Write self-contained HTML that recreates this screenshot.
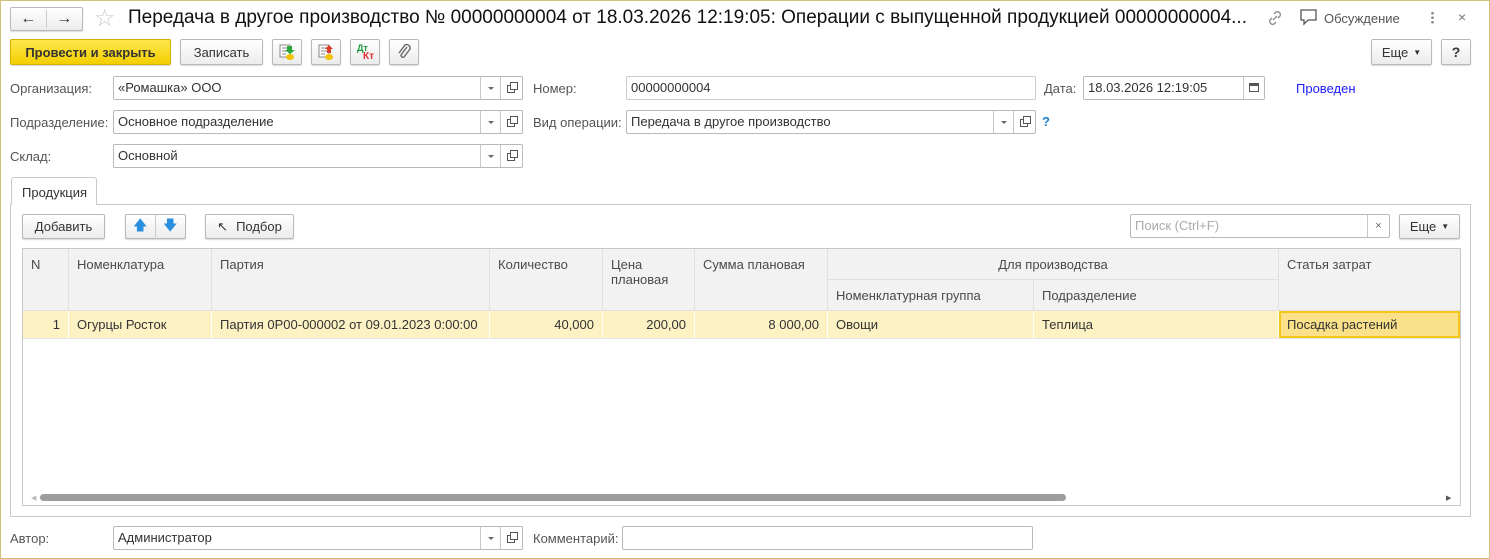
<!DOCTYPE html>
<html><head><meta charset="utf-8"><style>
*{box-sizing:border-box;margin:0;padding:0}
body{width:1490px;height:559px;overflow:hidden;background:#fff;font-family:"Liberation Sans",sans-serif;font-size:13px;color:#333;position:relative}
.a{position:absolute}
.frame{left:0;top:0;width:1490px;height:559px;border:1px solid #cfc07a}
.btn{position:absolute;border:1px solid #b9b9b9;border-radius:2px;background:linear-gradient(#fff,#ececec);box-shadow:0 1px 1px rgba(0,0,0,.15);display:flex;align-items:center;justify-content:center;color:#333;font-size:13px}
.lbl{position:absolute;color:#555;font-size:13px}
.fld{position:absolute;border:1px solid #b9b9b9;border-radius:2px;background:#fff;height:24px;padding-left:4px;line-height:22px;color:#333}
.dd{position:absolute;top:0;height:22px;width:21px;border-left:1px solid #c8c8c8}
.dd:after{content:"";position:absolute;left:7px;top:10px;border:3px solid transparent;border-top:3px solid #666}
.op{position:absolute;top:0;height:22px;width:22px;border-left:1px solid #c8c8c8}
.op:before{content:"";position:absolute;left:6px;top:8px;width:6px;height:6px;border:1px solid #555;background:#fff}
.op:after{content:"";position:absolute;left:9px;top:5px;width:6px;height:6px;border:1px solid #555;background:#fff}
.th{position:absolute;background:#f2f2f2;border-right:1px solid #e0e0e0;border-bottom:1px solid #e0e0e0;color:#4a4a4a;padding:8px 0 0 8px}
.td{position:absolute;top:311px;height:27px;background:#fdf2c4;border-right:1px solid #fff;line-height:28px;padding:0 8px;color:#333}
</style></head><body>
<div class="a frame"></div>
<div class="btn" style="left:10px;top:7px;width:73px;height:24px;padding:0"><span style="width:36px;text-align:center;font-size:16px;border-right:1px solid #ccc">&#8592;</span><span style="width:36px;text-align:center;font-size:16px">&#8594;</span></div>
<div class="a" style="left:94px;top:4px;font-size:24px;color:#c8c8c8">&#9734;</div>
<div class="a" style="left:128px;top:7px;font-size:19px;color:#111;white-space:nowrap">Передача в другое производство № 00000000004 от 18.03.2026 12:19:05: Операции с выпущенной продукцией 00000000004...</div>
<svg class="a" style="left:1266px;top:9px" width="18" height="18"><path d="M7 11l4-4M8 5l2-2a3 3 0 0 1 4 4l-2 2M10 13l-2 2a3 3 0 0 1-4-4l2-2" fill="none" stroke="#888" stroke-width="1.3"/></svg>
<svg class="a" style="left:1300px;top:9px" width="18" height="18"><path d="M1 1h15v10H8l-4 4v-4H1z" fill="none" stroke="#555" stroke-width="1.3"/></svg>
<div class="a" style="left:1324px;top:11px;color:#555">Обсуждение</div>
<div class="a" style="left:1431px;top:11px;width:3px;height:13px;background:radial-gradient(circle,#888 1.2px,transparent 1.5px) 0 0/3px 4.5px"></div>
<div class="a" style="left:1458px;top:9px;color:#777;font-size:14px">×</div>
<div class="btn" style="left:10px;top:39px;width:161px;height:26px;background:linear-gradient(#ffe84d,#f3ce00);border-color:#d3b100;font-weight:bold;color:#333">Провести и закрыть</div>
<div class="btn" style="left:180px;top:39px;width:83px;height:26px">Записать</div>
<div class="btn" style="left:272px;top:39px;width:30px;height:26px"><svg width="18" height="18"><rect x="2" y="2" width="10" height="12" fill="#fff" stroke="#888"/><path d="M4 5h6M4 8h6M4 11h4" stroke="#888"/><ellipse cx="12" cy="14" rx="4" ry="3" fill="#f2c200"/><path d="M9 3h5v4h3l-5 4-5-4h2z" fill="#2aa83a"/></svg></div>
<div class="btn" style="left:311px;top:39px;width:30px;height:26px"><svg width="18" height="18"><rect x="2" y="2" width="10" height="12" fill="#fff" stroke="#888"/><path d="M4 5h6M4 8h6M4 11h4" stroke="#888"/><ellipse cx="12" cy="14" rx="4" ry="3" fill="#f2c200"/><path d="M10 10v-4h-2l4-4 4 4h-2v4z" fill="#e03a2a"/></svg></div>
<div class="btn" style="left:350px;top:39px;width:30px;height:26px;display:block"><span class="a" style="left:6px;top:3px;font-size:9px;color:#1a9a3a;font-weight:bold">Дт</span><span class="a" style="left:12px;top:11px;font-size:10px;color:#e03030;font-weight:bold">Кт</span></div>
<div class="btn" style="left:389px;top:39px;width:30px;height:26px"><svg width="16" height="18"><path d="M11 4 5 12a2 2 0 0 0 3 2l6-8a3.5 3.5 0 0 0-5-4L3 10" fill="none" stroke="#666" stroke-width="1.4"/></svg></div>
<div class="btn" style="left:1371px;top:39px;width:61px;height:26px">Еще <span style="font-size:8px;margin-left:5px">&#9660;</span></div>
<div class="btn" style="left:1441px;top:39px;width:30px;height:26px;font-weight:bold;font-size:14px">?</div>
<div class="lbl" style="left:10px;top:81px">Организация:</div>
<div class="fld" style="left:113px;top:76px;width:410px">«Ромашка» ООО<div class="dd" style="left:366px"></div><div class="op" style="left:386px"></div></div>
<div class="lbl" style="left:533px;top:81px">Номер:</div>
<div class="fld" style="left:626px;top:76px;width:410px;border-color:#ccc">00000000004</div>
<div class="lbl" style="left:1044px;top:81px">Дата:</div>
<div class="fld" style="left:1083px;top:76px;width:182px">18.03.2026 12:19:05<div class="a" style="left:159px;top:0;width:21px;height:22px;border-left:1px solid #c8c8c8"><div class="a" style="left:5px;top:6px;width:10px;height:9px;border:1px solid #555;border-top-width:3px"></div></div></div>
<div class="a" style="left:1296px;top:81px;color:#1a1aff">Проведен</div>
<div class="lbl" style="left:10px;top:115px">Подразделение:</div>
<div class="fld" style="left:113px;top:110px;width:410px">Основное подразделение<div class="dd" style="left:366px"></div><div class="op" style="left:386px"></div></div>
<div class="lbl" style="left:533px;top:115px">Вид операции:</div>
<div class="fld" style="left:626px;top:110px;width:410px">Передача в другое производство<div class="dd" style="left:366px"></div><div class="op" style="left:386px"></div></div>
<div class="a" style="left:1042px;top:114px;color:#1e7fc9;font-weight:bold">?</div>
<div class="lbl" style="left:10px;top:149px">Склад:</div>
<div class="fld" style="left:113px;top:144px;width:410px">Основной<div class="dd" style="left:366px"></div><div class="op" style="left:386px"></div></div>
<div class="a" style="left:10px;top:204px;width:1461px;height:313px;border:1px solid #c8c8c8"></div>
<div class="a" style="left:11px;top:177px;width:86px;height:28px;border:1px solid #c8c8c8;border-bottom:none;border-radius:3px 3px 0 0;background:#fff;padding:7px 0 0 10px;color:#333">Продукция</div>
<div class="btn" style="left:22px;top:214px;width:83px;height:25px">Добавить</div>
<div class="btn" style="left:125px;top:214px;width:61px;height:25px;padding:0"><span style="width:30px;text-align:center;border-right:1px solid #ccc;color:#2a8fe0;font-size:14px">&#129093;</span><span style="width:30px;text-align:center;color:#2a8fe0;font-size:14px">&#129095;</span></div>
<div class="btn" style="left:205px;top:214px;width:89px;height:25px"><span style="margin-right:8px;font-size:13px">&#8598;</span>Подбор</div>
<div class="fld" style="left:1130px;top:214px;width:260px;color:#aaa">Поиск (Ctrl+F)<div class="a" style="left:236px;top:0;width:22px;height:22px;border-left:1px solid #c8c8c8;color:#666;text-align:center;font-size:11px">×</div></div>
<div class="btn" style="left:1399px;top:214px;width:61px;height:25px">Еще <span style="font-size:8px;margin-left:5px">&#9660;</span></div>
<div class="a" style="left:22px;top:248px;width:1439px;height:258px;border:1px solid #c8c8c8"></div>
<div class="th" style="left:23px;top:249px;width:46px;height:62px">N</div>
<div class="th" style="left:69px;top:249px;width:143px;height:62px">Номенклатура</div>
<div class="th" style="left:212px;top:249px;width:278px;height:62px">Партия</div>
<div class="th" style="left:490px;top:249px;width:113px;height:62px">Количество</div>
<div class="th" style="left:603px;top:249px;width:92px;height:62px">Цена<br>плановая</div>
<div class="th" style="left:695px;top:249px;width:133px;height:62px">Сумма плановая</div>
<div class="th" style="left:828px;top:249px;width:451px;height:31px;text-align:center;padding-left:0">Для производства</div>
<div class="th" style="left:828px;top:280px;width:206px;height:31px">Номенклатурная группа</div>
<div class="th" style="left:1034px;top:280px;width:245px;height:31px">Подразделение</div>
<div class="th" style="left:1279px;top:249px;width:181px;height:62px;border-right:none">Статья затрат</div>
<div class="td" style="left:23px;width:46px;text-align:right">1</div>
<div class="td" style="left:69px;width:143px">Огурцы Росток</div>
<div class="td" style="left:212px;width:278px">Партия 0Р00-000002 от 09.01.2023 0:00:00</div>
<div class="td" style="left:490px;width:113px;text-align:right">40,000</div>
<div class="td" style="left:603px;width:92px;text-align:right">200,00</div>
<div class="td" style="left:695px;width:133px;text-align:right">8 000,00</div>
<div class="td" style="left:828px;width:206px">Овощи</div>
<div class="td" style="left:1034px;width:245px">Теплица</div>
<div class="td" style="left:1279px;width:181px;background:#fbe18a;border:2px solid #f5c518;line-height:24px;padding-left:6px">Посадка растений</div>
<div class="a" style="left:23px;top:338px;width:1437px;height:1px;background:#e6e6e6"></div>
<div class="a" style="left:31px;top:494px;color:#bbb;font-size:7px">&#9664;</div>
<div class="a" style="left:1446px;top:494px;color:#555;font-size:7px">&#9654;</div>
<div class="a" style="left:40px;top:494px;width:1026px;height:7px;border-radius:4px;background:#9d9d9d"></div>
<div class="lbl" style="left:10px;top:531px">Автор:</div>
<div class="fld" style="left:113px;top:526px;width:410px">Администратор<div class="dd" style="left:366px"></div><div class="op" style="left:386px"></div></div>
<div class="lbl" style="left:533px;top:531px">Комментарий:</div>
<div class="fld" style="left:622px;top:526px;width:411px"></div>
</body></html>
